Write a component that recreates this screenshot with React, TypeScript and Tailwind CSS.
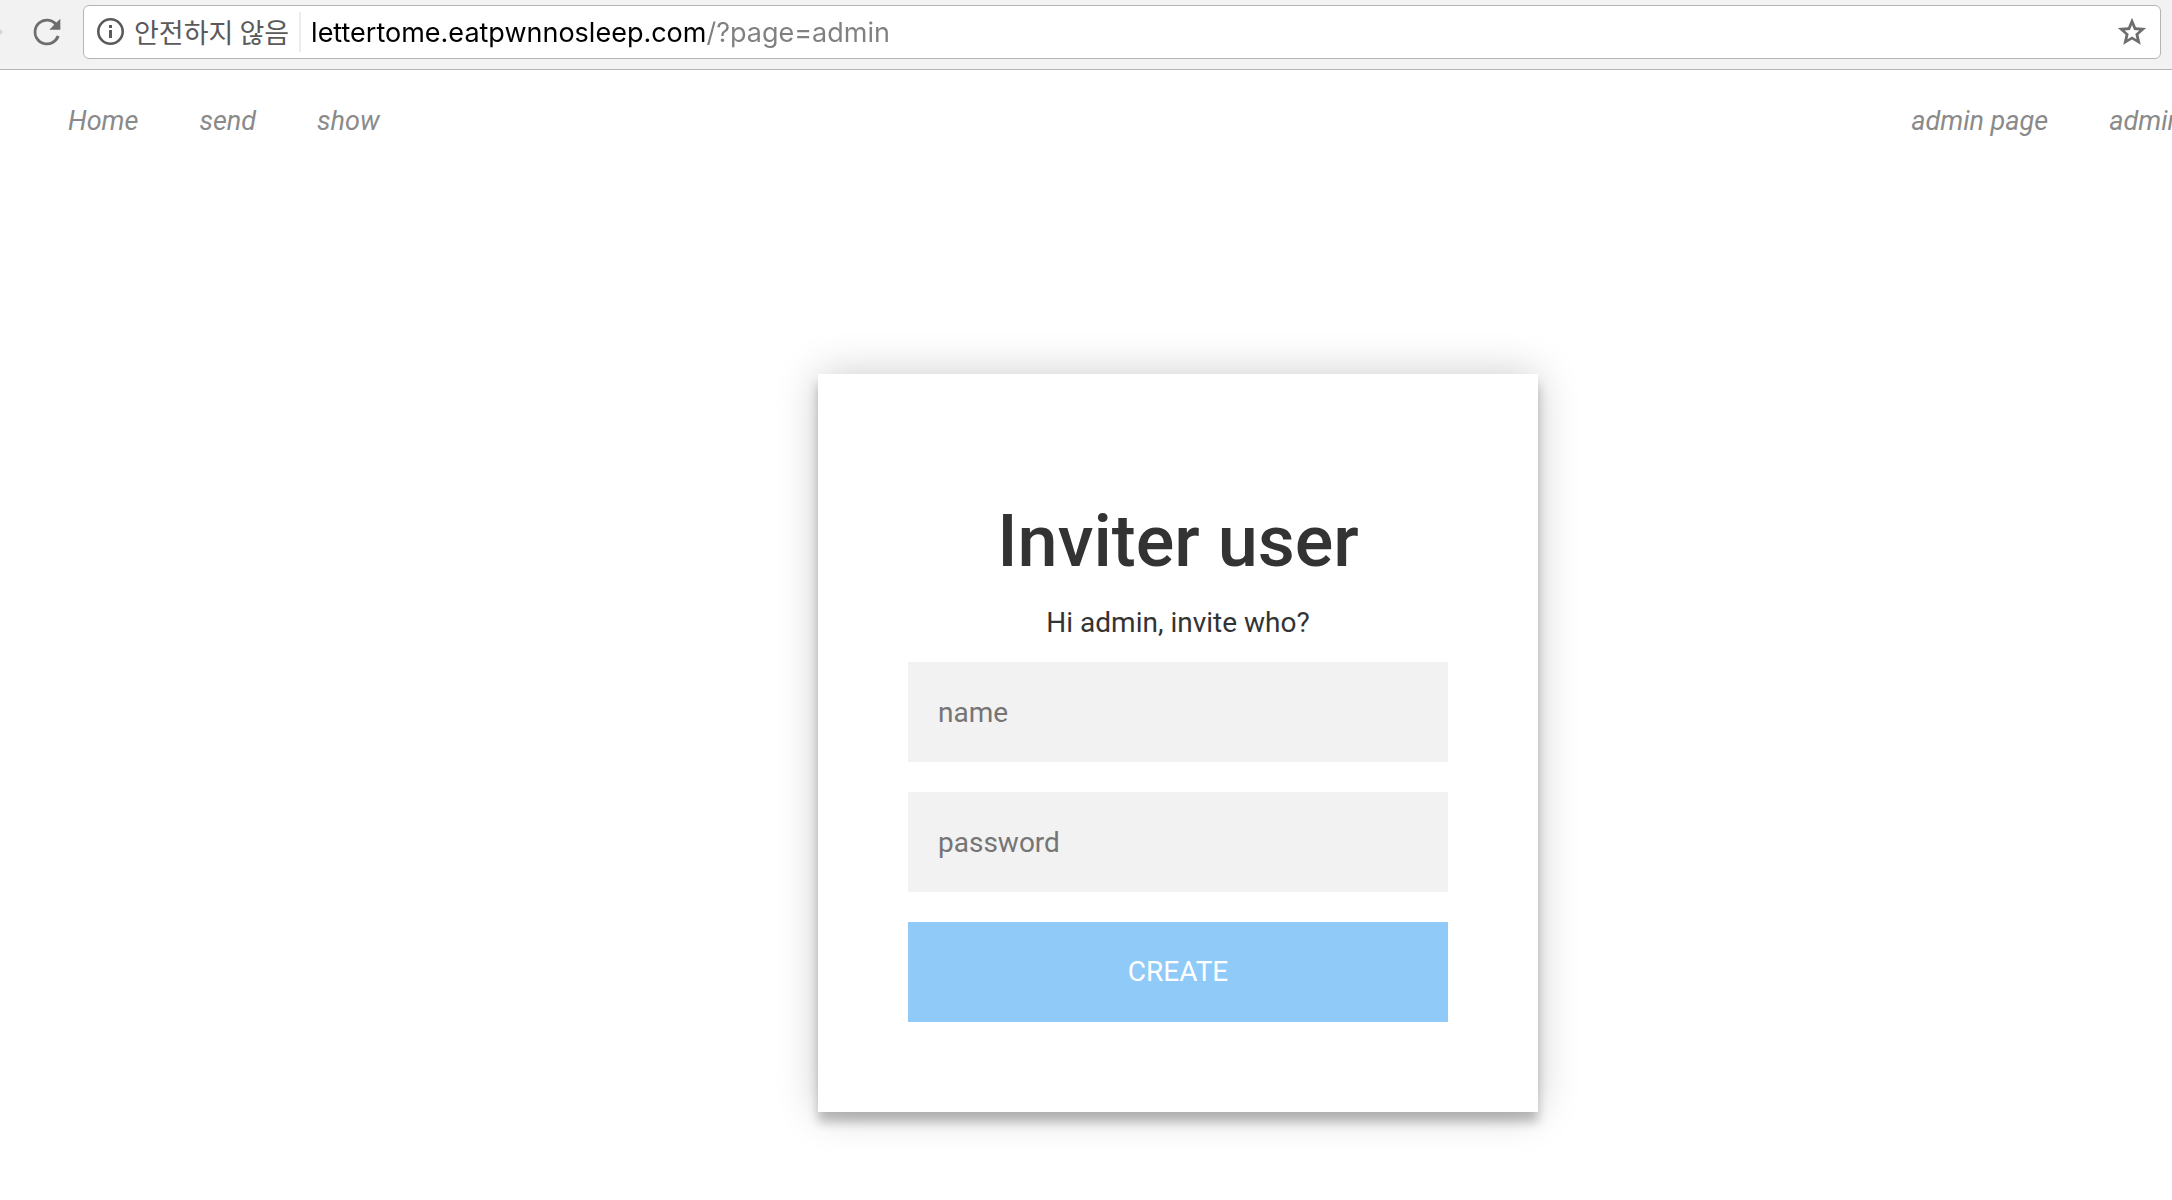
const leftLinks = ['Home', 'send', 'show'];
const rightLinks = ['admin page', 'admin'];

function BrowserBar() {
  return (
    <header className="flex items-center h-[70px] bg-[#f2f2f2] border-b border-[#b4b4b4] pb-[6px] pr-[11px]">
      <svg className="w-[3px] h-[28px] shrink-0" viewBox="0 0 3 28" aria-hidden="true">
        <path d="M-2 9 3 14-2 19z" fill="#d4d4d4" />
      </svg>
      <button aria-label="Reload" className="w-[80px] flex justify-center items-center pl-2 shrink-0">
        <svg width="40" height="40" viewBox="0 0 24 24" fill="#6e6e6e" aria-hidden="true">
          <path d="M17.65 6.35A7.96 7.96 0 0 0 12 4a8 8 0 1 0 7.53 10.7l-1.7-.6A6.3 6.3 0 1 1 12 5.7c1.7 0 3.2.69 4.34 1.94L13.4 10.6H20V4l-2.35 2.35z" />
        </svg>
      </button>
      <div className="flex flex-1 min-w-0 items-center h-[54px] bg-white border border-[#b4b4b4] rounded-md pl-[13px] pr-[11px]">
        <svg width="27" height="27" viewBox="0 0 27 27" fill="none" aria-hidden="true" className="shrink-0">
          <circle cx="13.5" cy="13.5" r="12.2" stroke="#5a5a5a" strokeWidth="2.6" />
          <path d="M12 7h3v3h-3zM12 12h3v8h-3z" fill="#5a5a5a" />
        </svg>
        <span className="ml-[10px] text-[27px] leading-8 text-[#5a5a5a] whitespace-nowrap font-['Noto_Sans_CJK_KR',sans-serif]">안전하지 않음</span>
        <span className="w-[2px] h-10 ml-[10px] bg-[#ebebeb]" />
        <input
          aria-label="Address"
          defaultValue="lettertome.eatpwnnosleep.com/?page=admin"
          className="flex-1 min-w-0 ml-[10px] h-10 pt-[3px] text-[27px] font-['Inter',sans-serif] text-transparent bg-clip-text bg-[linear-gradient(90deg,#000_396px,#808080_396px)] outline-none"
        />
        <button aria-label="Bookmark this page" className="shrink-0">
          <svg width="34" height="34" viewBox="0 0 24 24" fill="#6e6e6e" aria-hidden="true">
            <path d="M22 9.24l-7.19-.62L12 2 9.19 8.63 2 9.24l5.46 4.73L5.82 21 12 17.27 18.18 21l-1.63-7.03L22 9.24zM12 15.1l-3.2 2 .85-3.7-2.85-2.45 3.75-.32L12 7.1l1.45 3.53 3.75.32-2.85 2.45.85 3.7L12 15.1z" />
          </svg>
        </button>
      </div>
    </header>
  );
}

function NavLinks({ items }: { items: string[] }) {
  return (
    <ul className="flex gap-[61px]">
      {items.map((item) => (
        <li key={item}>
          <a href="#" className="italic text-[27px] text-[#8a8a8a] whitespace-nowrap">{item}</a>
        </li>
      ))}
    </ul>
  );
}

function InviteCard() {
  const field = 'w-full h-[100px] px-[30px] bg-[#f2f2f2] text-[#333333] placeholder:text-[#757575] outline-none';
  return (
    <form
      onSubmit={(e) => e.preventDefault()}
      className="w-[720px] p-[90px] bg-white text-center text-[#333333] shadow-[0_0_40px_0_rgba(0,0,0,0.2),0_10px_10px_0_rgba(0,0,0,0.24)]"
    >
      <h1 className="mt-9 text-[72px] leading-[84px] font-medium">Inviter user</h1>
      <p className="my-[19px] leading-10">Hi admin, invite who?</p>
      <div className="flex flex-col gap-[30px]">
        <input aria-label="name" placeholder="name" className={field} />
        <input aria-label="password" type="password" placeholder="password" className={field} />
        <button type="submit" className="h-[100px] bg-[#90caf9] text-white">CREATE</button>
      </div>
    </form>
  );
}

export default function App() {
  return (
    <div className="min-h-screen overflow-hidden bg-white text-[28px] font-['Roboto',sans-serif]">
      <BrowserBar />
      <div className="w-[calc(100%+184px)]">
        <nav className="flex justify-between h-[102px] items-center pl-[68px] pr-[174px]">
          <NavLinks items={leftLinks} />
          <NavLinks items={rightLinks} />
        </nav>
        <main className="flex justify-center pt-[202px] pb-[88px]">
          <InviteCard />
        </main>
      </div>
    </div>
  );
}
